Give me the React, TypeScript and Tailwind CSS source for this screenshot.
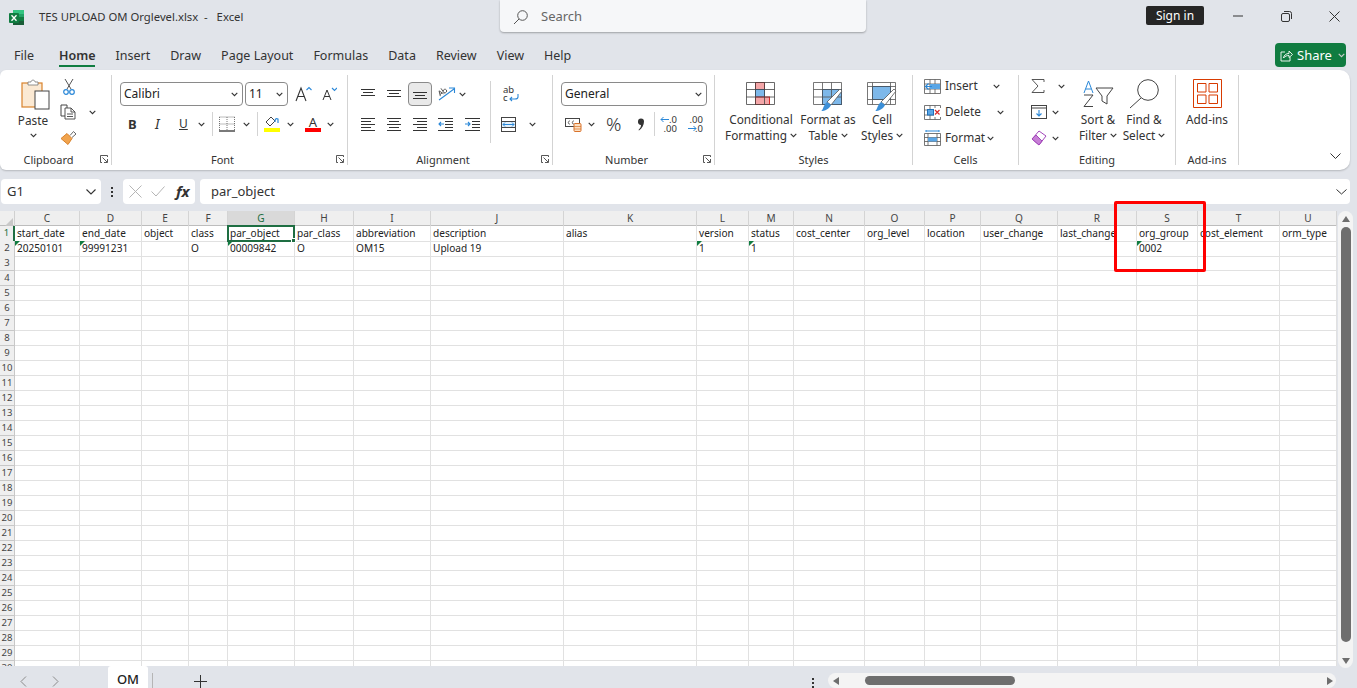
import type { ReactNode } from "react";

const COLS = ["C", "D", "E", "F", "G", "H", "I", "J", "K", "L", "M", "N", "O", "P", "Q", "R", "S", "T", "U"];
const GRID = "grid grid-cols-[15px_65px_62px_47px_39px_67px_59px_77px_133px_133px_52px_45px_71px_60px_56px_77px_79px_61px_82px_57px]";

const ROW1 = ["start_date", "end_date", "object", "class", "par_object", "par_class", "abbreviation", "description", "alias", "version", "status", "cost_center", "org_level", "location", "user_change", "last_change", "org_group", "cost_element", "orm_type"];
const ROW2 = ["20250101", "99991231", "", "O", "00009842", "O", "OM15", "Upload 19", "", "1", "1", "", "", "", "", "", "0002", "", ""];
const FLAGGED = ["C", "D", "G", "L", "M", "S"];
const ROWS = Array.from({ length: 30 }, (_, i) => i + 1);

const TABS = ["File", "Home", "Insert", "Draw", "Page Layout", "Formulas", "Data", "Review", "View", "Help"];

function Chev({ className = "" }: { className?: string }) {
  return (
    <svg width="7" height="5" viewBox="0 0 7 5" className={className}>
      <path d="M0.7 0.8 L3.5 3.6 L6.3 0.8" fill="none" stroke="#333" strokeWidth="1.1" />
    </svg>
  );
}

function Launcher() {
  return (
    <svg width="8" height="8" viewBox="0 0 8 8" className="mr-[3px] shrink-0">
      <path d="M0.5 7.5 V0.5 H7.5 V2 M0.5 7.5 H2 M2.5 2.5 L7 7 M7.5 4 V7.5 H4" fill="none" stroke="#444" strokeWidth="0.9" />
    </svg>
  );
}

function Group({ label, width, children, launcher }: { label: string; width: string; children: ReactNode; launcher?: boolean }) {
  return (
    <div className={`${width} flex flex-col h-full shrink-0 border-r border-[#d3d3d3]`}>
      <div className="flex-1 min-h-0">{children}</div>
      <div className="h-[14px] -mb-[1px] flex items-center text-[11px] text-[#333] leading-none">
        <div className={launcher ? "flex-1 text-center pr-[3px]" : "flex-1 text-center"}>{label}</div>
        {launcher && <Launcher />}
      </div>
    </div>
  );
}

function Combo({ width, label, font }: { width: string; label: string; font?: boolean }) {
  return (
    <div className={`${width} h-[24px] border border-[#8a8a8a] rounded-[4px] flex items-center justify-between pl-[3px] pr-[4px] text-[12px] text-[#222] ${font ? "font-['Lato']" : ""}`}>
      <span>{label}</span>
      <Chev />
    </div>
  );
}

function Lines({ rows }: { rows: number[][] }) {
  return (
    <svg width="15" height="14" viewBox="0 0 15 14">
      {rows.map((r, i) => (
        <path key={i} d={`M${r[0]} ${r[2]} H${r[1]}`} stroke="#333" strokeWidth="1" />
      ))}
    </svg>
  );
}

function ExcelLogo() {
  return (
    <svg width="17" height="17" viewBox="0 0 17 17" className="ml-[8px]">
      <rect x="5" y="1" width="11" height="15" rx="1" fill="#21a366" />
      <rect x="5" y="1" width="11" height="4" fill="#33c481" />
      <rect x="10" y="8" width="6" height="4" fill="#107c41" />
      <rect x="5" y="12" width="11" height="4" fill="#185c37" />
      <rect x="1" y="4" width="10" height="10" rx="1" fill="#107c41" />
      <path d="M3.5 6.3 L8.5 11.7 M8.5 6.3 L3.5 11.7" stroke="#fff" strokeWidth="1.3" />
    </svg>
  );
}

function TitleBar() {
  return (
    <div className="h-[43px] flex items-start">
      <div className="w-[500px] h-[33px] pt-[1px] flex items-center text-[11.3px] text-[#333]">
        <ExcelLogo />
        <span className="ml-[14px] whitespace-pre">TES UPLOAD OM Orglevel.xlsx  -  </span>
        <span className="ml-[3px]">Excel</span>
      </div>
      <div className="w-[366px] h-[32px] pt-[1px] bg-[#f6f7f9] rounded-b-[4px] shadow-[0_1px_2px_rgba(0,0,0,0.3)] flex items-center pl-[13px] text-[13px] text-[#666]">
        <svg width="16" height="16" viewBox="0 0 16 16">
          <circle cx="9.5" cy="6.5" r="4.8" fill="none" stroke="#555" strokeWidth="1" />
          <path d="M6 10 L1 15" stroke="#555" strokeWidth="1" />
        </svg>
        <span className="ml-[12px]">Search</span>
      </div>
      <div className="ml-[280px] mt-[6px] w-[58px] h-[19px] bg-[#262626] rounded-[2px] text-white text-[12px] leading-[19px] text-center">Sign in</div>
      <svg width="10" height="2" viewBox="0 0 10 2" className="ml-[29px] mt-[15px]">
        <path d="M0 1 H10" stroke="#333" strokeWidth="1" />
      </svg>
      <svg width="11" height="11" viewBox="0 0 11 11" className="ml-[38px] mt-[11px]">
        <rect x="0.5" y="2.5" width="8" height="8" rx="1.5" fill="none" stroke="#333" />
        <path d="M3 0.5 H8.5 A2 2 0 0 1 10.5 2.5 V8" fill="none" stroke="#333" />
      </svg>
      <svg width="11" height="11" viewBox="0 0 11 11" className="ml-[37px] mt-[11px]">
        <path d="M0.5 0.5 L10.5 10.5 M10.5 0.5 L0.5 10.5" stroke="#333" strokeWidth="1" />
      </svg>
    </div>
  );
}

function TabBar() {
  return (
    <div className="h-[27px] flex items-start pl-[14px] pr-[11px]">
      <div className="flex gap-[20px] text-[12.5px] text-[#333] h-[24px] pt-[2px] items-center">
        {TABS.map((t) => (
          <div key={t} className={t === "Home" ? "relative h-full flex items-center font-semibold after:absolute after:left-0 after:right-0 after:bottom-0 after:h-[2px] after:bg-[#107c41]" : t === "File" ? "mr-[5px]" : ""}>
            {t}
          </div>
        ))}
      </div>
      <div className="ml-auto w-[71px] h-[24px] pt-[1px] bg-[#107c41] rounded-[4px] text-white text-[13px] flex items-center pl-[5px]">
        <svg width="13" height="13" viewBox="0 0 13 13">
          <path d="M5 3 H1 V12 H10 V8 M3.5 9 C4 6 6 4.500 9 4.500 V2 L12.500 5.500 L9 8.500 V6.500 C7 6.500 5 7 3.500 9Z" fill="none" stroke="#fff" strokeWidth="0.9" />
        </svg>
        <span className="ml-[4px]">Share</span>
        <Chev className="ml-[6px] invert" />
      </div>
    </div>
  );
}

function ClipboardGroup() {
  return (
    <div className="flex pl-[15px] h-full">
      <div className="w-[36px] flex flex-col items-center">
        <svg width="29" height="31" viewBox="0 0 29 31" className="mt-[4px] ml-[4px]">
          <rect x="1" y="4" width="20" height="24" fill="#fbe9d3" stroke="#d9822b" strokeWidth="1.2" />
          <path d="M7 6 V3 H10 C10 0.500 14 0.500 14 3 H17 V6 Z" fill="#fff" stroke="#777" strokeWidth="0.8" />
          <rect x="14" y="12" width="14" height="18" fill="#fff" stroke="#444" strokeWidth="1" />
        </svg>
        <div className="text-[11.8px] text-[#333] mt-[2px] leading-[16px]">Paste</div>
        <Chev className="mt-[5px]" />
      </div>
      <div className="ml-[9px] flex flex-col mt-[3px]">
        <svg width="12" height="17" viewBox="0 0 12 17" className="ml-[3px]">
          <path d="M2 1 L8 11 M10 1 L4 11" stroke="#555" strokeWidth="1" />
          <circle cx="3" cy="14" r="2.300" fill="none" stroke="#2b88d8" strokeWidth="1.2" />
          <circle cx="9" cy="14" r="2.300" fill="none" stroke="#2b88d8" strokeWidth="1.2" />
        </svg>
        <div className="flex items-center mt-[9px]">
          <svg width="17" height="16" viewBox="0 0 17 16">
            <path d="M7 1 H1 V12 H5 M7 1 V4" fill="none" stroke="#444" />
            <path d="M5 4 H11 L15 8 V15 H5 Z M11 4 V8 H15 M7 10 H13 M7 12.500 H13" fill="#fff" stroke="#444" strokeWidth="0.9" />
          </svg>
          <Chev className="ml-[12px]" />
        </div>
        <svg width="17" height="16" viewBox="0 0 17 15" className="mt-[10px]">
          <path d="M10 5 L13.500 1 L16 3.500 L12 7" fill="#fff" stroke="#666" />
          <path d="M1 8 L7 3 L12 8 L8 14 Z" fill="#f1a44e" stroke="#d9822b" />
        </svg>
      </div>
    </div>
  );
}

function FontGroup() {
  return (
    <div className="pl-[8px] h-full flex flex-col">
      <div className="flex items-center mt-[7px]">
        <Combo width="w-[123px]" label="Calibri" font />
        <div className="ml-[2px]"><Combo width="w-[43px]" label="11" font /></div>
        <svg width="17" height="16" viewBox="0 0 17 16" className="ml-[7px]">
          <path d="M1 15 L6 2 L11 15 M3 10.500 H9" fill="none" stroke="#333" strokeWidth="1.1" />
          <path d="M11.500 4 L14 1.500 L16.500 4" fill="none" stroke="#2b88d8" strokeWidth="1.1" />
        </svg>
        <svg width="15" height="14" viewBox="0 0 15 14" className="ml-[10px]">
          <path d="M1 13 L5 3 L9 13 M2.500 9.500 H7.500" fill="none" stroke="#333" strokeWidth="1" />
          <path d="M10 1 L12.500 3.500 L15 1" fill="none" stroke="#2b88d8" strokeWidth="1.1" />
        </svg>
      </div>
      <div className="flex items-center mt-[6px] h-[24px] text-[#333]">
        <span className="ml-[8px] w-[8px] font-bold text-[13px] font-['Liberation_Sans'] leading-none">B</span>
        <span className="ml-[19px] w-[7px] italic text-[14px] font-['Liberation_Serif'] leading-none">I</span>
        <span className="ml-[17px] w-[10px] underline text-[12px] font-['Liberation_Sans'] leading-none">U</span>
        <Chev className="ml-[9px]" />
        <div className="ml-[7px] w-px h-[24px] bg-[#d3d3d3]" />
        <svg width="16" height="16" viewBox="0 0 16 16" className="ml-[6px]">
          <path d="M0.500 1 H15.500 M0.500 8 H15.500 M0.500 1 V15 M15.500 1 V15 M8 1 V15" fill="none" stroke="#555" strokeWidth="0.8" strokeDasharray="1 1" />
          <path d="M0 15 H16" stroke="#222" strokeWidth="1.2" />
        </svg>
        <Chev className="ml-[8px]" />
        <div className="ml-[7px] w-px h-[24px] bg-[#d3d3d3]" />
        <div className="ml-[6px] w-[16px] flex flex-col items-center">
          <svg width="14" height="11" viewBox="0 0 14 11">
            <path d="M1 6 L6 1 L10 5 L5 10 Z" fill="#fff" stroke="#444" />
            <path d="M10 6 C10 3 11 2 13 3 V7" fill="none" stroke="#2b88d8" strokeWidth="1.200" />
          </svg>
          <div className="w-[16px] h-[4px] bg-[#ffff00] mt-[1px]" />
        </div>
        <Chev className="ml-[7px]" />
        <div className="ml-[11px] w-[16px] flex flex-col items-center">
          <span className="text-[13px] leading-[12px] font-['Liberation_Sans']">A</span>
          <div className="w-[16px] h-[4px] bg-[#ff0000]" />
        </div>
        <Chev className="ml-[6px]" />
      </div>
    </div>
  );
}

function AlignmentGroup() {
  const top = [[0, 14, 2.500], [2, 12, 5.500], [0, 14, 8.500]];
  const mid = [[0, 14, 3.500], [2, 12, 6.500], [0, 14, 9.500]];
  const bot = [[0, 14, 5.500], [2, 12, 8.500], [0, 14, 11.500]];
  const left = [[0, 14, 1.500], [0, 10, 4.500], [0, 14, 7.500], [0, 10, 10.500], [0, 14, 13.500]];
  const center = [[0, 14, 1.500], [2, 12, 4.500], [0, 14, 7.500], [2, 12, 10.500], [0, 14, 13.500]];
  const right = [[0, 14, 1.500], [4, 14, 4.500], [0, 14, 7.500], [4, 14, 10.500], [0, 14, 13.500]];
  return (
    <div className="pl-[13px] h-full flex">
      <div className="w-[129px] mt-[7px]">
        <div className="h-[24px] flex items-center">
          <div className="w-[26px]"><Lines rows={top} /></div>
          <div className="w-[21px]"><Lines rows={mid} /></div>
          <div className="w-[24px] h-[24px] bg-[#e9e9e9] border border-[#8a8a8a] rounded-[4px] flex items-center justify-center"><Lines rows={bot} /></div>
          <svg width="18" height="16" viewBox="0 0 18 16" className="ml-[6px]">
            <path d="M1 14 L16 3 M11 2 H16.500 V7" fill="none" stroke="#2b88d8" strokeWidth="1.100" />
            <g transform="rotate(-35 5 7)">
              <path d="M1 8 L3 3 L5 8 M1.700 6.500 H4.300 M6 2 V8 M6 5.500 C8 4 9.500 5 9.500 6.500 C9.500 8 7.500 9 6 7.500" fill="none" stroke="#444" strokeWidth="0.800" />
            </g>
          </svg>
          <Chev className="ml-[3px]" />
        </div>
        <div className="h-[24px] flex items-center mt-[6px]">
          <div className="w-[26px]"><Lines rows={left} /></div>
          <div className="w-[26px]"><Lines rows={center} /></div>
          <div className="w-[25px]"><Lines rows={right} /></div>
          <div className="w-[27px]">
            <svg width="15" height="14" viewBox="0 0 15 14">
              <path d="M0 1.500 H15 M7 4.500 H15 M7 7.500 H15 M7 10.500 H15 M0 13.500 H15" stroke="#333" />
              <path d="M6 7 H1 M3 5 L1 7 L3 9" fill="none" stroke="#2b88d8" strokeWidth="1.100" />
            </svg>
          </div>
          <svg width="15" height="14" viewBox="0 0 15 14">
            <path d="M0 1.500 H15 M7 4.500 H15 M7 7.500 H15 M7 10.500 H15 M0 13.500 H15" stroke="#333" />
            <path d="M0 7 H5 M3 5 L5 7 L3 9" fill="none" stroke="#2b88d8" strokeWidth="1.100" />
          </svg>
        </div>
      </div>
      <div className="w-px h-[62px] bg-[#d3d3d3] mt-[6px]" />
      <div className="pl-[10px] mt-[7px]">
        <div className="h-[24px] flex items-center text-[9.5px] leading-[8px] text-[#333] font-['Liberation_Sans']">
          <div className="w-[16px] relative ml-[2px]">
            <div>ab</div>
            <div>c</div>
            <svg width="10" height="8" viewBox="0 0 10 8" className="absolute left-[6px] top-[8px]">
              <path d="M9 0 V3 C9 5 7 5 6 5 H1 M3 3 L1 5 L3 7" fill="none" stroke="#2b88d8" strokeWidth="1.100" />
            </svg>
          </div>
        </div>
        <div className="h-[24px] flex items-center mt-[6px]">
          <svg width="15" height="15" viewBox="0 0 15 15">
            <rect x="0.500" y="0.500" width="14" height="14" fill="#fff" stroke="#444" />
            <path d="M0 4.500 H15 M0 10.500 H15" stroke="#444" />
            <rect x="1" y="5" width="13" height="5" fill="#e3f0fb" />
            <path d="M2 7.500 H13 M4 5.500 L2 7.500 L4 9.500 M11 5.500 L13 7.500 L11 9.500" fill="none" stroke="#2b88d8" />
          </svg>
          <Chev className="ml-[13px]" />
        </div>
      </div>
    </div>
  );
}

function NumberGroup() {
  return (
    <div className="pl-[8px] h-full">
      <div className="mt-[7px]"><Combo width="w-[146px]" label="General" /></div>
      <div className="flex items-center mt-[6px] h-[24px] text-[#333]">
        <svg width="17" height="15" viewBox="0 0 17 15" className="ml-[4px]">
          <rect x="0.500" y="1.500" width="14" height="8" fill="#fff" stroke="#444" />
          <path d="M5 4 C3 3.500 2.500 7.500 5 7 M9 4 C7 3.500 6.500 7.500 9 7" fill="none" stroke="#444" strokeWidth="0.800" />
          <rect x="9" y="6.500" width="7" height="8" rx="1" fill="#fbe0c3" stroke="#d9722b" />
          <path d="M9 9.500 H16 M9 12 H16" stroke="#d9722b" strokeWidth="0.700" />
        </svg>
        <Chev className="ml-[6px]" />
        <span className="ml-[11px] w-[16px] text-[19px] leading-none font-['Liberation_Sans'] font-light">%</span>
        <svg width="8" height="13" viewBox="0 0 8 13" className="ml-[15px]">
          <path d="M1 3.500 A3 3 0 1 1 7 3.500 C7 7 5 10.500 2 12.500 L1.500 12 C3 10.500 4 9 4 7 A3 3 0 0 1 1 3.500Z" fill="#333" />
        </svg>
        <div className="ml-[9px] w-px h-[24px] bg-[#d3d3d3]" />
        <div className="ml-[5px] w-[17px] text-[9.5px] leading-[9px] text-right font-['Liberation_Sans'] relative">
          <div>.0</div>
          <div>.00</div>
          <svg width="10" height="7" viewBox="0 0 10 7" className="absolute left-0 top-[1px]">
            <path d="M9 3.500 H1 M3.500 1 L1 3.500 L3.500 6" fill="none" stroke="#2b88d8" />
          </svg>
        </div>
        <div className="ml-[10px] w-[16px] text-[9.5px] leading-[9px] text-right font-['Liberation_Sans'] relative">
          <div>.00</div>
          <div>.0</div>
          <svg width="10" height="7" viewBox="0 0 10 7" className="absolute left-0 top-[10px]">
            <path d="M1 3.500 H9 M6.500 1 L9 3.500 L6.500 6" fill="none" stroke="#2b88d8" />
          </svg>
        </div>
      </div>
    </div>
  );
}

function GridIcon({ children }: { children: ReactNode }) {
  return (
    <svg width="30" height="30" viewBox="0 0 30 30" className="block mx-auto">
      {children}
    </svg>
  );
}

const BIG_GRID = "M0.500 0.500 H28.500 V22.500 H0.500 Z M0.500 7.500 H28.500 M0.500 15 H28.500 M9.500 0.500 V22.500 M18.500 0.500 V22.500";

function BigButton({ width, icon, lines, chevOn, iconClass }: { width: string; icon: ReactNode; lines: string[]; chevOn?: boolean; iconClass: string }) {
  return (
    <div className={`${width} flex flex-col items-center`}>
      <div className={iconClass}>{icon}</div>
      <div className="text-[11.8px] text-[#333] leading-[16px] text-center whitespace-nowrap">{lines[0]}</div>
      {lines[1] && (
        <div className="text-[11.8px] text-[#333] leading-[16px] flex items-center whitespace-nowrap">
          {lines[1]}
          {chevOn && <Chev className="ml-[3px]" />}
        </div>
      )}
    </div>
  );
}

function StylesGroup() {
  return (
    <div className="flex h-full pl-[9px]">
      <BigButton
        width="w-[74px]"
        lines={["Conditional", "Formatting"]}
        chevOn
        iconClass="mt-[7px] h-[29px]"
        icon={
          <GridIcon>
            <rect x="9.500" y="0.500" width="9" height="7" fill="#f4a6a8" stroke="#d92b2b" />
            <rect x="9.500" y="7.500" width="9" height="7.500" fill="#7db8ea" stroke="#3b80c4" />
            <rect x="9.500" y="15" width="14" height="7.500" fill="#f4a6a8" stroke="#d92b2b" />
            <path d={BIG_GRID} fill="none" stroke="#444" strokeWidth="0.800" />
          </GridIcon>
        }
      />
      <BigButton
        width="w-[60px]"
        lines={["Format as", "Table"]}
        chevOn
        iconClass="mt-[7px] h-[29px]"
        icon={
          <GridIcon>
            <rect x="9.500" y="7.500" width="19" height="15" fill="#7db8ea" stroke="#1e6fb8" />
            <path d={BIG_GRID} fill="none" stroke="#555" strokeWidth="0.800" />
            <path d="M14 20 L27 7 L29 9 L18 23 Z" fill="#fff" stroke="#555" strokeWidth="0.800" />
            <path d="M8 29 C10 29 10 23 14 20 L18 23 C16 27 12 29 8 29Z" fill="#3b8fd8" />
          </GridIcon>
        }
      />
      <BigButton
        width="w-[48px]"
        lines={["Cell", "Styles"]}
        chevOn
        iconClass="mt-[7px] h-[29px]"
        icon={
          <GridIcon>
            <rect x="5.500" y="4.500" width="18" height="13" fill="#7db8ea" stroke="#1e6fb8" />
            <path d="M0.500 0.500 H28.500 V22.500 H0.500 Z M0.500 4.500 H28.500 M0.500 17.500 H28.500 M5.500 0.500 V22.500 M23.500 0.500 V22.500" fill="none" stroke="#555" strokeWidth="0.800" />
            <path d="M14 20 L27 7 L29 9 L18 23 Z" fill="#fff" stroke="#555" strokeWidth="0.800" />
            <path d="M8 29 C10 29 10 23 14 20 L18 23 C16 27 12 29 8 29Z" fill="#3b8fd8" />
          </GridIcon>
        }
      />
    </div>
  );
}

function CellsGroup() {
  return (
    <div className="pl-[11px] -mt-[2px] text-[11.8px] text-[#333]">
      <div className="h-[26px] flex items-center">
        <svg width="17" height="15" viewBox="0 0 17 15">
          <path d="M0.500 0.500 H16.500 V14.500 H0.500 Z M0.500 5 H16.500 M0.500 10 H16.500 M6 0.500 V14.500 M11 0.500 V14.500" fill="none" stroke="#555" strokeWidth="0.800" />
          <rect x="6" y="5" width="10" height="5" fill="#5aa6e6" />
          <path d="M8 7.500 H2 M4.500 4.500 L1.500 7.500 L4.500 10.500" fill="none" stroke="#2b88d8" strokeWidth="1.200" />
        </svg>
        <span className="ml-[4px] w-[48px]">Insert</span>
        <Chev />
      </div>
      <div className="h-[26px] flex items-center">
        <svg width="17" height="15" viewBox="0 0 17 15">
          <path d="M0.500 0.500 H16.500 V14.500 H0.500 Z M0.500 5 H16.500 M0.500 10 H16.500 M6 0.500 V14.500 M11 0.500 V14.500" fill="none" stroke="#555" strokeWidth="0.800" />
          <rect x="3.500" y="4.500" width="6" height="5.500" fill="#5aa6e6" stroke="#1e6fb8" />
          <rect x="10" y="3" width="7" height="9" fill="#fff" />
          <path d="M11 5 L15.500 9.500 M15.500 5 L11 9.500" stroke="#d92b2b" strokeWidth="1.200" />
        </svg>
        <span className="ml-[4px] w-[52px]">Delete</span>
        <Chev />
      </div>
      <div className="h-[26px] flex items-center">
        <svg width="17" height="16" viewBox="0 0 17 16">
          <path d="M2 1 H15 M2 0 V2 M15 0 V2" stroke="#2b88d8" fill="none" />
          <path d="M0.500 3.500 H16.500 V15.500 H0.500 Z M0.500 7.500 H16.500 M0.500 11.500 H16.500 M4 3.500 V15.500 M13 3.500 V15.500" fill="none" stroke="#555" strokeWidth="0.800" />
          <rect x="4" y="7.500" width="9" height="4" fill="#5aa6e6" />
        </svg>
        <span className="ml-[4px] w-[42px]">Format</span>
        <Chev />
      </div>
    </div>
  );
}

function EditingGroup() {
  return (
    <div className="flex h-full">
      <div className="w-[56px] pl-[12px] -mt-[2px]">
        <div className="h-[26px] flex items-center">
          <svg width="14" height="14" viewBox="0 0 14 14">
            <path d="M13 3 V0.500 H1 L7 7 L1 13.500 H13 V11" fill="none" stroke="#444" strokeWidth="0.900" />
          </svg>
          <Chev className="ml-[13px]" />
        </div>
        <div className="h-[26px] flex items-center">
          <svg width="16" height="14" viewBox="0 0 16 14">
            <rect x="0.500" y="0.500" width="15" height="13" fill="#fff" stroke="#444" />
            <path d="M0.500 3 H15.500" stroke="#444" />
            <path d="M8 5 V11 M5.500 8.500 L8 11 L10.500 8.500" fill="none" stroke="#2b88d8" strokeWidth="1.100" />
          </svg>
          <Chev className="ml-[5px]" />
        </div>
        <div className="h-[26px] flex items-center">
          <svg width="16" height="16" viewBox="0 0 16 16">
            <path d="M8 1 L15 6 L8 15 L1 9 Z" fill="#fff" stroke="#a347ba" />
            <path d="M1 9 L5 5 L11 11 L8 15 Z" fill="#c77fd6" stroke="#a347ba" />
          </svg>
          <Chev className="ml-[5px]" />
        </div>
      </div>
      <BigButton
        width="w-[46px]"
        lines={["Sort &", "Filter"]}
        chevOn
        iconClass="mt-[5px] h-[31px]"
        icon={
          <svg width="32" height="28" viewBox="0 0 32 28" className="block">
            <path d="M2 13 L6.500 1 L11 13 M3.700 9 H9.300" fill="none" stroke="#2b88d8" strokeWidth="1" />
            <path d="M2 15 H11 L2 26.500 H11" fill="none" stroke="#444" strokeWidth="1" />
            <path d="M14 8 H31 L25 16 V24 L20 21 V16 Z" fill="#fff" stroke="#444" strokeWidth="1" />
          </svg>
        }
      />
      <BigButton
        width="w-[46px]"
        lines={["Find &", "Select"]}
        chevOn
        iconClass="mt-[4px] h-[32px]"
        icon={
          <svg width="32" height="30" viewBox="0 0 32 30" className="block">
            <circle cx="20" cy="11" r="10.300" fill="#fff" stroke="#444" strokeWidth="1" />
            <path d="M13 19 L2 29" stroke="#444" strokeWidth="1" />
          </svg>
        }
      />
    </div>
  );
}

function Ribbon() {
  return (
    <div className="ml-0 w-[1350px] h-[100px] bg-white rounded-r-[10px] rounded-l-[6px] shadow-[0_1px_2px_rgba(0,0,0,0.2)] flex py-[5px] relative">
      <Group label="Clipboard" width="w-[112px]" launcher><ClipboardGroup /></Group>
      <Group label="Font" width="w-[236px]" launcher><FontGroup /></Group>
      <Group label="Alignment" width="w-[205px]" launcher><AlignmentGroup /></Group>
      <Group label="Number" width="w-[162px]" launcher><NumberGroup /></Group>
      <Group label="Styles" width="w-[198px]"><StylesGroup /></Group>
      <Group label="Cells" width="w-[106px]"><CellsGroup /></Group>
      <Group label="Editing" width="w-[157px]"><EditingGroup /></Group>
      <Group label="Add-ins" width="w-[63px]">
        <BigButton
          width="w-full"
          lines={["Add-ins", ""]}
          iconClass="mt-[4px] h-[32px]"
          icon={
            <svg width="29" height="29" viewBox="0 0 29 29" className="block">
              <path d="M0.500 0.500 H28.500 V28.500 H0.500 Z" fill="none" stroke="#d83b01" />
              <path d="M4.500 4.500 H13 V13 H4.500 Z M16 4.500 H24.500 V13 H16 Z M4.500 16 H13 V24.500 H4.500 Z M16 16 H24.500 V24.500 H16 Z" fill="none" stroke="#d83b01" />
            </svg>
          }
        />
      </Group>
      <svg width="11" height="7" viewBox="0 0 11 7" className="absolute right-[9px] bottom-[10px]">
        <path d="M0.500 0.500 L5.500 5.500 L10.500 0.500" fill="none" stroke="#333" />
      </svg>
    </div>
  );
}

function FormulaBar() {
  return (
    <div className="h-[25px] mt-[9px] flex items-stretch pl-[1px] text-[#333]">
      <div className="w-[100px] bg-white rounded-[4px] flex items-center justify-between pl-[6px] pr-[5px] text-[13px]">
        <span>G1</span>
        <svg width="10" height="6" viewBox="0 0 10 6">
          <path d="M0.500 0.500 L5 5 L9.500 0.500" fill="none" stroke="#333" strokeWidth="1.100" />
        </svg>
      </div>
      <div className="w-[22px] flex flex-col items-center justify-center gap-[2px]">
        <div className="w-[2px] h-[2px] bg-[#333]" />
        <div className="w-[2px] h-[2px] bg-[#333]" />
        <div className="w-[2px] h-[2px] bg-[#333]" />
      </div>
      <div className="w-[72px] bg-white rounded-[4px] flex items-center pl-[6px]">
        <svg width="13" height="13" viewBox="0 0 13 13">
          <path d="M0.500 0.500 L12.500 12.500 M12.500 0.500 L0.500 12.500" stroke="#b5b5b5" />
        </svg>
        <svg width="14" height="11" viewBox="0 0 14 11" className="ml-[9px]">
          <path d="M0.500 5.500 L5 10 L13.500 0.500" fill="none" stroke="#b5b5b5" />
        </svg>
        <span className="ml-[11px] italic font-bold text-[15px] font-['Liberation_Serif'] text-[#333]">fx</span>
      </div>
      <div className="ml-[5px] w-[1150px] bg-white rounded-[4px] flex items-center justify-between pl-[11px] pr-[3px] text-[13px]">
        <span>par_object</span>
        <svg width="11" height="6" viewBox="0 0 11 6">
          <path d="M0.500 0.500 L5.500 5 L10.500 0.500" fill="none" stroke="#333" />
        </svg>
      </div>
    </div>
  );
}

function Sheet() {
  return (
    <div className="relative h-[455px] mt-[7px] flex">
      <div className="w-[1337px] h-full overflow-hidden bg-white font-['Lato',sans-serif] text-[10.1px] text-[#222]">
        <div className={`${GRID} h-[15px] bg-[#efefef] border-b border-[#bdbdbd] text-[#444]`}>
          <div className="border-r border-[#d0d0d0] flex items-end justify-end pr-[1px] pb-[1px]">
            <div className="w-0 h-0 border-l-[8px] border-l-transparent border-b-[8px] border-b-[#c8c8c8]" />
          </div>
          {COLS.map((c) => (
            <div key={c} className={`border-r border-[#d4d4d4] text-center leading-[14px] ${c === "G" ? "bg-[#d9d9d9] text-[#1e6e42] border-b-2 border-b-[#1e6e42]" : ""}`}>
              {c}
            </div>
          ))}
        </div>
        {ROWS.map((r) => (
          <div key={r} className={`${GRID} h-[15px]`}>
            <div className={`bg-[#efefef] text-center leading-[14px] border-r border-b border-[#c8c8c8] text-[9.5px] ${r === 1 ? "text-[#1e6e42] border-r-2 border-r-[#1e6e42] bg-[#d9d9d9]" : "text-[#444]"}`}>
              {r}
            </div>
            {COLS.map((c, i) => {
              const text = r === 1 ? ROW1[i] : r === 2 ? ROW2[i] : "";
              const selected = r === 1 && c === "G";
              return (
                <div key={c} className={`relative border-r border-b border-[#e1e1e1] pl-[2px] leading-[15px] whitespace-nowrap ${selected ? "z-10" : ""}`}>
                  {text}
                  {r === 2 && FLAGGED.includes(c) && (
                    <div className="absolute left-0 top-0 w-0 h-0 border-t-[5px] border-t-[#107c41] border-r-[5px] border-r-transparent" />
                  )}
                  {selected && (
                    <div className="absolute -left-[1px] -top-[1px] right-[-1px] bottom-[-1px] border-2 border-[#1e6e42]">
                      <div className="absolute -right-[3px] -bottom-[3px] w-[5px] h-[5px] bg-[#1e6e42] border border-white" />
                    </div>
                  )}
                </div>
              );
            })}
          </div>
        ))}
      </div>
      <div className="ml-[1px] w-[15px] h-[457px] bg-[#f4f4f4] rounded-full flex flex-col items-center pt-[5px] pb-[4px]">
        <div className="w-0 h-0 border-x-[4px] border-x-transparent border-b-[6px] border-b-[#6e6e6e]" />
        <div className="w-[10px] h-[415px] mt-[5px] bg-[#6e6e6e] rounded-full" />
        <div className="w-0 h-0 border-x-[4px] border-x-transparent border-t-[6px] border-t-[#6e6e6e] mt-auto" />
      </div>
    </div>
  );
}

function SheetTabs() {
  return (
    <div className="h-[22px] flex items-start">
      <div className="w-[108px] h-full flex items-center pl-[20px]">
        <svg width="7" height="11" viewBox="0 0 7 11" className="mt-[8px]">
          <path d="M6 0.500 L1 5.500 L6 10.500" fill="none" stroke="#8a8a8a" />
        </svg>
        <svg width="7" height="11" viewBox="0 0 7 11" className="ml-[25px] mt-[8px]">
          <path d="M1 0.500 L6 5.500 L1 10.500" fill="none" stroke="#8a8a8a" />
        </svg>
      </div>
      <div className="w-[40px] h-full bg-white rounded-t-[3px] text-center text-[13px] font-medium leading-[26px] text-[#222]">OM</div>
      <div className="ml-[4px] w-px h-[15px] mt-[7px] bg-[#b5b5b5]" />
      <svg width="13" height="13" viewBox="0 0 13 13" className="ml-[41px] mt-[9px]">
        <path d="M6.500 0 V13 M0 6.500 H13" stroke="#333" />
      </svg>
      <div className="ml-[605px] mt-[12px] flex flex-col gap-[2px]">
        <div className="w-[2px] h-[2px] bg-[#333]" />
        <div className="w-[2px] h-[2px] bg-[#333]" />
        <div className="w-[2px] h-[2px] bg-[#333]" />
      </div>
      <div className="ml-[14px] mt-[7px] w-[508px] h-[15px] bg-[#f4f4f4] rounded-l-full rounded-r-full flex items-center pl-[5px] pr-[3px]">
        <div className="w-0 h-0 border-y-[4px] border-y-transparent border-r-[6px] border-r-[#6e6e6e]" />
        <div className="ml-[26px] w-[150px] h-[9px] bg-[#6e6e6e] rounded-full" />
        <div className="w-0 h-0 border-y-[4px] border-y-transparent border-l-[6px] border-l-[#6e6e6e] ml-auto" />
      </div>
    </div>
  );
}

export default function App() {
  return (
    <div className="relative w-[1357px] h-[688px] overflow-hidden bg-[#e1e4ea] font-['Noto_Sans',sans-serif]">
      <TitleBar />
      <TabBar />
      <Ribbon />
      <FormulaBar />
      <Sheet />
      <SheetTabs />
      {/* annotation drawn on the screenshot */}
      <div className="absolute left-[1114px] top-[201px] w-[92px] h-[71px] border-[3px] border-[#ff0000] rounded-[2px] pointer-events-none z-20" />
    </div>
  );
}
